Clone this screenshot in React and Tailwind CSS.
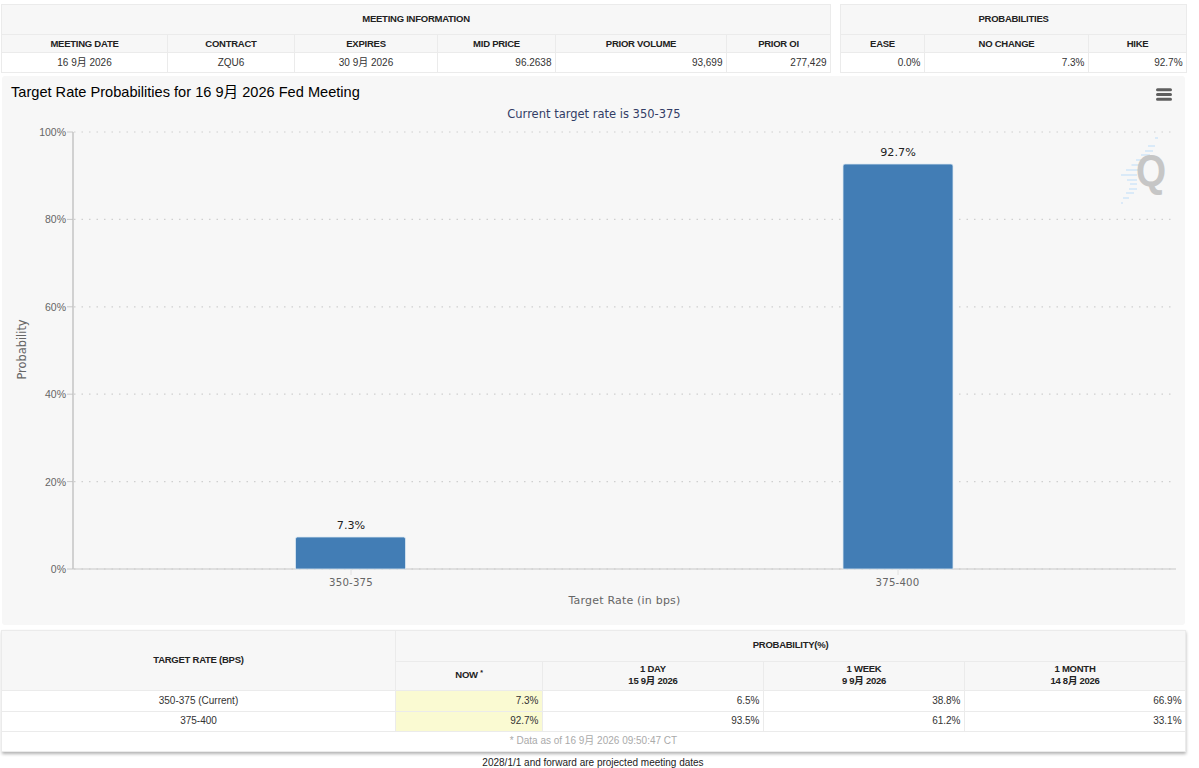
import React from "react";

const FONT = "font-['Liberation_Sans','Noto_Sans_CJK_SC',sans-serif]";
const th = "border border-[#ebebeb] bg-[#f7f7f7] text-center align-middle font-bold text-[9.5px] tracking-[-0.25px] leading-[12px] text-[#222] p-0";
const td = "border border-[#ebebeb] bg-white text-[10px] leading-[12px] text-[#333] p-0";
const num = td + " text-right pr-[3.5px]";
const ctr = td + " text-center";

function TopTables() {
  return (
    <div className="flex gap-[9px] pl-px pt-[4px]">
      <table className="table-fixed border-collapse w-[829px] h-[68px]">
        <colgroup>
          <col className="w-[166px]" /><col className="w-[127px]" /><col className="w-[143px]" />
          <col className="w-[118px]" /><col className="w-[171px]" /><col className="w-[104px]" />
        </colgroup>
        <thead>
          <tr className="h-[30px]"><th colSpan={6} className={th + " pb-[2px]"}>MEETING INFORMATION</th></tr>
          <tr className="h-[18px]">
            {["MEETING DATE", "CONTRACT", "EXPIRES", "MID PRICE", "PRIOR VOLUME", "PRIOR OI"].map((h) => (
              <th key={h} className={th}>{h}</th>
            ))}
          </tr>
        </thead>
        <tbody>
          <tr className="h-[20px]">
            <td className={ctr}>16 9月 2026</td>
            <td className={ctr}>ZQU6</td>
            <td className={ctr}>30 9月 2026</td>
            <td className={num}>96.2638</td>
            <td className={num}>93,699</td>
            <td className={num}>277,429</td>
          </tr>
        </tbody>
      </table>
      <table className="table-fixed border-collapse w-[346px] h-[68px]">
        <colgroup>
          <col className="w-[84px]" /><col className="w-[164px]" /><col className="w-[98px]" />
        </colgroup>
        <thead>
          <tr className="h-[30px]"><th colSpan={3} className={th + " pb-[2px]"}>PROBABILITIES</th></tr>
          <tr className="h-[18px]">
            {["EASE", "NO CHANGE", "HIKE"].map((h) => (
              <th key={h} className={th}>{h}</th>
            ))}
          </tr>
        </thead>
        <tbody>
          <tr className="h-[20px]">
            <td className={num}>0.0%</td>
            <td className={num}>7.3%</td>
            <td className={num}>92.7%</td>
          </tr>
        </tbody>
      </table>
    </div>
  );
}

function Chart() {
  const grid = [
    [132, "100%"], [219.4, "80%"], [306.8, "60%"], [394.2, "40%"], [481.6, "20%"], [569, "0%"],
  ];
  const streaks = [
    [1155, 138, 3], [1148, 146, 7], [1145, 151, 8], [1141, 155, 9], [1136, 160, 7], [1131.5, 165, 8],
    [1126, 170, 13], [1121, 175, 16], [1127, 180, 10], [1130, 184, 7], [1129, 189, 8], [1126, 193, 8],
    [1123, 198, 6], [1121, 203, 2],
  ];
  return (
    <div className="mt-[3px] ml-[2px] w-[1183px] h-[549px] bg-[#f7f7f7] rounded-[3px] flex flex-col">
      <div className="flex justify-between h-[31px] pl-[9px] pr-[13px] pt-[5.5px]">
        <h1 className="text-[14.6px] leading-[20px] font-normal text-black">Target Rate Probabilities for 16 9月 2026 Fed Meeting</h1>
        <svg width="16" height="13" viewBox="0 0 16 13" className="mt-[6px]">
          <path d="M1.5 1.8h13M1.5 6.5h13M1.5 11.2h13" stroke="#5f5f5f" strokeWidth="3" strokeLinecap="round" />
        </svg>
      </div>
      <div className="h-[15px] text-center pl-[1px] font-['DejaVu_Sans',sans-serif] text-[11.5px] leading-[15px] text-[#333d66]">
        Current target rate is 350-375
      </div>
      <svg width="1183" height="503" className="block font-['DejaVu_Sans',sans-serif]">
        <g transform="translate(-2,-122)">
          {grid.map(([y, label]) => (
            <g key={label}>
              <line x1="74" x2="1176" y1={y} y2={y} stroke="#cfcfcf" strokeWidth="1.2" strokeDasharray="1.5 6" />
              <line x1="67" x2="73" y1={y} y2={y} stroke="#c8c8c8" />
              <text x="66" y={y + 4} textAnchor="end" fontFamily="Liberation Sans" fontSize="10.5" fill="#666">{label}</text>
            </g>
          ))}
          <line x1="73" x2="73" y1="132" y2="569" stroke="#c0c0c0" strokeWidth="1.4" />
          <line x1="73" x2="1176" y1="569" y2="569" stroke="#c8c8c8" strokeWidth="1.2" />
          <line x1="351" x2="351" y1="569" y2="575" stroke="#e0e0e0" />
          <line x1="898" x2="898" y1="569" y2="575" stroke="#e0e0e0" />

          <g>
            {streaks.map(([x, y, w], i) => (
              <line key={i} x1={x} x2={x + w} y1={y} y2={y} stroke="#d3e6f8" strokeWidth="1.6" />
            ))}
            <text transform="translate(1151,186) scale(0.88,1)" textAnchor="middle" fontFamily="Liberation Sans" fontWeight="700" fontSize="44" fill="#c6c6c6">Q</text>
          </g>

          <path d="M295.5 569V539a2 2 0 0 1 2-2h106a2 2 0 0 1 2 2v30z" fill="#427db5" stroke="#dce8f2" strokeWidth="0.8" />
          <path d="M843 569V166a2 2 0 0 1 2-2h106a2 2 0 0 1 2 2v403z" fill="#427db5" stroke="#dce8f2" strokeWidth="0.8" />
          <text x="351" y="529" textAnchor="middle" fontSize="11.2" fill="#222">7.3%</text>
          <text x="898" y="156" textAnchor="middle" fontSize="11.2" fill="#222">92.7%</text>

          <text x="351" y="586" textAnchor="middle" fontSize="10.2" fill="#666" letterSpacing="0.2">350-375</text>
          <text x="897.5" y="586" textAnchor="middle" fontSize="10.2" fill="#666" letterSpacing="0.2">375-400</text>
          <text x="624.5" y="603.5" textAnchor="middle" fontSize="11" fill="#666" letterSpacing="0.2">Target Rate (in bps)</text>
          <text x="0" y="0" transform="translate(26,349.5) rotate(-90)" textAnchor="middle" fontSize="11.4" fill="#666">Probability</text>
        </g>
      </svg>
    </div>
  );
}

function ProbTable() {
  const rows = [
    ["350-375 (Current)", "7.3%", "6.5%", "38.8%", "66.9%"],
    ["375-400", "92.7%", "93.5%", "61.2%", "33.1%"],
  ];
  return (
    <div className="mt-[5px] ml-px w-[1184px] shadow-[1px_2px_3px_rgba(0,0,0,0.3)]">
      <table className="table-fixed border-collapse w-full">
        <colgroup>
          <col className="w-[394px]" /><col className="w-[147px]" /><col className="w-[221px]" />
          <col className="w-[201px]" /><col className="w-[221px]" />
        </colgroup>
        <thead>
          <tr className="h-[31px]">
            <th rowSpan={2} className={th + " pb-[2px]"}>TARGET RATE (BPS)</th>
            <th colSpan={4} className={th + " pb-[2px]"}>PROBABILITY(%)</th>
          </tr>
          <tr className="h-[29px]">
            <th className={th + " pb-[2px]"}>NOW <sup className="text-[7px] leading-[0]">*</sup></th>
            <th className={th + " pb-[2px]"}>1 DAY<br />15 9月 2026</th>
            <th className={th + " pb-[2px]"}>1 WEEK<br />9 9月 2026</th>
            <th className={th + " pb-[2px]"}>1 MONTH<br />14 8月 2026</th>
          </tr>
        </thead>
        <tbody>
          {rows.map((r) => (
            <tr key={r[0]} className="h-[20.5px]">
              <td className={ctr}>{r[0]}</td>
              <td className={num + " !bg-[#fafad2]"}>{r[1]}</td>
              <td className={num}>{r[2]}</td>
              <td className={num}>{r[3]}</td>
              <td className={num}>{r[4]}</td>
            </tr>
          ))}
          <tr className="h-[20px]">
            <td colSpan={5} className={ctr + " !text-[#aaa] pb-[1px]"}>* Data as of 16 9月 2026 09:50:47 CT</td>
          </tr>
        </tbody>
      </table>
    </div>
  );
}

export default function App() {
  return (
    <div className={FONT + " w-[1199px] h-[768px] bg-white overflow-hidden"}>
      <TopTables />
      <Chart />
      <ProbTable />
      <div className="mt-[4px] w-[1186px] text-center text-[10px] leading-[14px] text-[#222]">
        2028/1/1 and forward are projected meeting dates
      </div>
    </div>
  );
}
